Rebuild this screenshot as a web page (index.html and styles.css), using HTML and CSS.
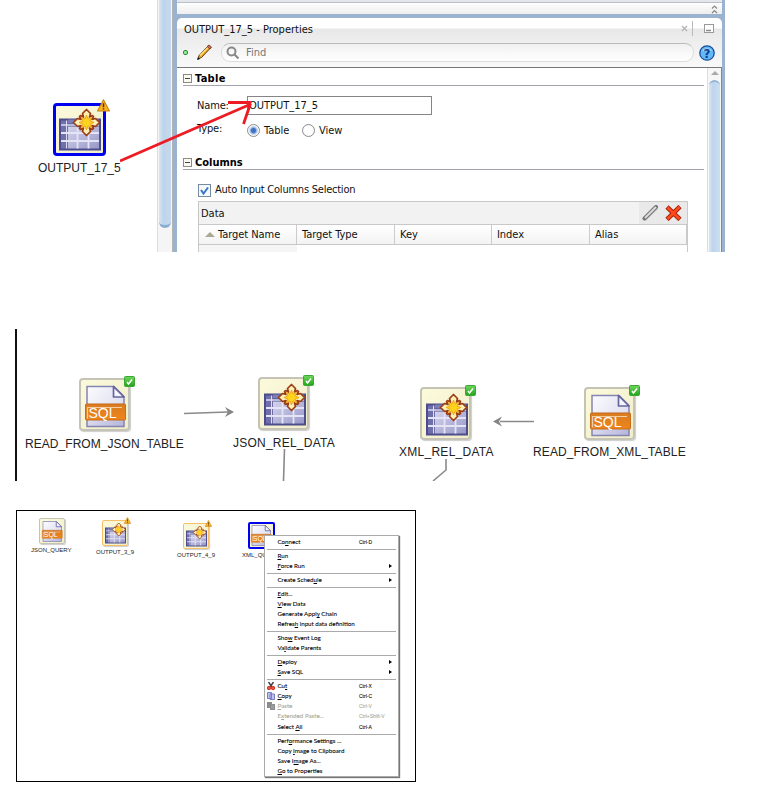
FILE: index.html
```html
<!DOCTYPE html>
<html lang="en">
<head>
<meta charset="utf-8">
<title>Workflow properties</title>
<link rel="stylesheet" href="styles.css">
</head>
<body>
<svg class="defs" width="0" height="0">
  <defs>
    <linearGradient id="lilac" x1="0" y1="0" x2="1" y2="1"><stop offset="0" stop-color="#fafaff"/><stop offset="1" stop-color="#b4b4dc"/></linearGradient>
    <linearGradient id="cells" x1="0" y1="0" x2="1" y2="1"><stop offset="0" stop-color="#d4d4ee"/><stop offset="1" stop-color="#9898c8"/></linearGradient>
    <linearGradient id="orange" x1="0" y1="0" x2="0" y2="1"><stop offset="0" stop-color="#d87b21"/><stop offset="1" stop-color="#ef851b"/></linearGradient>
    <linearGradient id="green" x1="0" y1="0" x2="0" y2="1"><stop offset="0" stop-color="#71d65d"/><stop offset="1" stop-color="#20a51b"/></linearGradient>
    <symbol id="table-art" viewBox="0 0 52 52">
      <rect x="6" y="15" width="42" height="32" fill="#4d4d8c"/>
      <rect x="8" y="17" width="4" height="28" fill="#6f6fae"/>
      <rect x="15" y="16" width="31" height="4" fill="#7c7cb6"/>
      <rect x="15" y="23" width="31" height="22" fill="url(#cells)"/>
      <path d="M8 21.500H46M13.500 17V45" stroke="#dcdcf2" stroke-width="1.500"/>
      <path d="M8 29.500H46M8 37.500H46M24.500 17V45M35.500 17V45" stroke="#e4e4f6" stroke-width="1.800"/>
      <g transform="translate(.5 1)">
        <path d="M33 5.500l4 4-1 3.500 3-1.500 1 1-1.500 3 3.500-1 4 4-4 4-3.500-1 1.500 3-1 1-3-1.500 1 3.500-4 4-4-4 1-3.500-3 1.500-1-1 1.500-3-3.500 1-4-4 4-4 3.500 1-1.500-3 1-1 3 1.500-1-3.500z" transform="translate(0 -.5)" fill="#fff0b4" stroke="#9c3d14" stroke-width="1.700" stroke-linejoin="round"/>
        <path d="M33 10.500l1.500 4 3.500-1.500-1.500 3.500 4 1.500-4 1.500 1.500 3.500-3.500-1.500-1.500 4-1.500-4-3.500 1.500 1.500-3.500-4-1.500 4-1.500-1.500-3.500 3.500 1.500z" fill="#ffd21c" stroke="#e89d10" stroke-width=".8"/>
      </g>
    </symbol>
    <symbol id="sql-art" viewBox="0 0 52 52">
      <path d="M8 7h27l10 10v30H8z" fill="url(#lilac)" stroke="#8585b1" stroke-width="1.500"/>
      <path d="M9 8h25l10 10v6H9z" fill="#fff" fill-opacity=".4"/>
      <path d="M34.500 7v10.500H45z" fill="#f5f5ff" stroke="#66669f" stroke-width="1.700" stroke-linejoin="round"/>
      <rect x="6.500" y="24.500" width="40" height="16" rx="1" fill="url(#orange)" stroke="#c76c18"/>
      <path d="M8.500 39V28H43" fill="none" stroke="#f5cfa4" stroke-width="1.200"/>
      <text x="9.500" y="38" class="sql-text" textLength="28">SQL</text>
    </symbol>
    <symbol id="ok-badge" viewBox="0 0 11 11"><rect x=".5" y=".5" width="10" height="10" rx="1" fill="url(#green)" stroke="#3ba634"/><path d="M3 6l1.500 2L8 3.500" fill="none" stroke="#fff" stroke-width="1.500"/></symbol>
    <symbol id="warn-badge" viewBox="0 0 12 12"><path d="M6 .7L11.500 11H.5z" fill="#fab41e" stroke="#c98211" stroke-linejoin="round"/><path d="M6 4v3.500M6 8.500v1.300" stroke="#553000" stroke-width="1.400"/></symbol>
  </defs>
</svg>

<section class="editor">
  <div class="flow">
    <div class="node selected big out17">
      <svg class="tile"><use href="#table-art"/></svg>
      <svg class="badge warn"><use href="#warn-badge"/></svg>
    </div>
    <span class="label l17">OUTPUT_17_5</span>
  </div>
  <div class="track"><div class="thumb"></div></div>
  <div class="panel">
    <div class="strip"><svg width="7" height="9" viewBox="0 0 7 9"><path d="M1 3.500L3.500 1 6 3.500M1 8L3.500 5.500 6 8" fill="none" stroke="#888" stroke-width="1.200"/></svg></div>
    <div class="head">
      <div class="title"><span class="t-title">OUTPUT_17_5 - Properties</span>
        <svg class="winbtns" width="34" height="16" viewBox="0 0 34 16"><path d="M2 5l5 5M7 5l-5 5" stroke="#b8b8b8" stroke-width="1.500"/><path d="M12.500 0v15" stroke="#bbb"/><rect x="24.500" y="3.500" width="9" height="8" fill="#fff" stroke="#999"/><path d="M26 9.500h5" stroke="#888" stroke-width="1.500"/></svg>
      </div>
      <div class="tools">
        <span class="dot"></span>
        <svg class="pencil" width="17" height="17" viewBox="0 0 17 17"><path d="M2 15l1-3.500L12.500 1.500l2.500 2L5.500 13.500z" fill="#f6a81c" stroke="#4e3312" stroke-width=".9"/><path d="M4 11.500L12.500 3" stroke="#ffe48c" stroke-width="1.300"/><path d="M11 2.500L13 1l2.500 2L14 5z" fill="#c0705c" stroke="#6d2e1c" stroke-width=".7"/><path d="M1 16l1-3L4 15z" fill="#111"/></svg>
        <div class="find"><svg width="14" height="14" viewBox="0 0 14 14"><circle cx="5.500" cy="5.500" r="4" fill="none" stroke="#888" stroke-width="2"/><path d="M8.500 8.500l4 4" stroke="#888" stroke-width="2.200"/></svg><span>Find</span></div>
        <svg class="help" width="16" height="16" viewBox="0 0 16 16"><circle cx="8" cy="8" r="7.200" fill="#62b9f8" stroke="#1c4f9b" stroke-width="1.300"/><path d="M3 6a5.500 4.500 0 0 1 10 0" fill="#a9dcff"/><text x="8" y="12.500" class="q">?</text></svg>
      </div>
    </div>
    <div class="body">
      <div class="content">
        <h2 class="h-table"><i></i><span>Table</span></h2>
        <div class="row name"><label>Name:</label><div class="input">OUTPUT_17_5</div></div>
        <div class="row type"><label>Type:</label><div class="radio on"></div><span class="r1">Table</span><div class="radio"></div><span>View</span></div>
        <h2 class="h-cols"><i></i><span>Columns</span></h2>
        <div class="check"><svg width="13" height="13" viewBox="0 0 13 13"><rect x=".5" y=".5" width="12" height="12" fill="#f4f8fc" stroke="#758ba2"/><path d="M3 6l2.500 3.500L10 3.500" fill="none" stroke="#3a74c4" stroke-width="2"/></svg><span>Auto Input Columns Selection</span></div>
        <div class="grid">
          <div class="bar"><span>Data</span><div class="acts">
            <svg width="17" height="16" viewBox="0 0 17 16"><path d="M3 14.500L15 3" stroke="#ccc" stroke-width="3"/><path d="M2.500 13.500L14 2" stroke="#777" stroke-width="4" stroke-linecap="round"/><path d="M3 13L14 2" stroke="#ddd" stroke-width="1.800"/></svg>
            <svg width="17" height="16" viewBox="0 0 17 16"><path d="M2 2l13 12.500M15 1.500L2 14.500" stroke="#a42510" stroke-width="4.600"/><path d="M2.500 2.500l12 11.500M14.500 2L2.500 14" stroke="#ff4a1c" stroke-width="2.600"/></svg>
          </div></div>
          <div class="cols"><div><b class="sort"></b>Target Name</div><div>Target Type</div><div>Key</div><div>Index</div><div>Alias</div></div>
          <div class="firstrow"></div>
        </div>
      </div>
      <div class="scroll"><b></b><div></div></div>
    </div>
  </div>
  <svg class="pointer" width="260" height="100" viewBox="0 0 260 100"><path d="M0 72L131 15M108 13.500H131M130.500 14.500L123.500 35" fill="none" stroke="#ed1c24" stroke-width="2.800"/></svg>
</section>

<section class="graph">
  <svg class="links" width="700" height="152" viewBox="0 329 700 152">
    <g fill="none" stroke="#8a8a8a" stroke-width="1.600"><path d="M184 413.500L228 412M284.500 449L283.500 481M534 421.500H500M446 459v11l-13 11"/></g>
    <path d="M234 412l-9-5 3 5-3 5zM493 421.500l9-5-3 5 3 5z" fill="#858585"/>
  </svg>
  <div class="node n1"><svg class="tile"><use href="#sql-art"/></svg><svg class="badge"><use href="#ok-badge"/></svg></div><span class="label l1">READ_FROM_JSON_TABLE</span>
  <div class="node n2"><svg class="tile"><use href="#table-art"/></svg><svg class="badge"><use href="#ok-badge"/></svg></div><span class="label l2">JSON_REL_DATA</span>
  <div class="node n3"><svg class="tile"><use href="#table-art"/></svg><svg class="badge"><use href="#ok-badge"/></svg></div><span class="label l3">XML_REL_DATA</span>
  <div class="node n4"><svg class="tile"><use href="#sql-art"/></svg><svg class="badge"><use href="#ok-badge"/></svg></div><span class="label l4">READ_FROM_XML_TABLE</span>
</section>

<section class="desk">
  <div class="node small s1"><svg class="tile"><use href="#sql-art"/></svg></div><span class="label tiny t1">JSON_QUERY</span>
  <div class="node small amber s2"><svg class="tile"><use href="#table-art"/></svg><svg class="badge"><use href="#warn-badge"/></svg></div><span class="label tiny t2">OUTPUT_3_9</span>
  <div class="node small amber s3"><svg class="tile"><use href="#table-art"/></svg><svg class="badge"><use href="#warn-badge"/></svg></div><span class="label tiny t3">OUTPUT_4_9</span>
  <div class="node small selected s4"><svg class="tile"><use href="#sql-art"/></svg></div><span class="label tiny t4">XML_QUERY</span>
  <div class="menu">
    <div class="item"><span>Co<u>n</u>nect</span><kbd>Ctrl-D</kbd></div>
    <hr>
    <div class="item"><span><u>R</u>un</span></div>
    <div class="item sub"><span><u>F</u>orce Run</span></div>
    <hr>
    <div class="item sub"><span>Create Sched<u>u</u>le</span></div>
    <hr>
    <div class="item"><span><u>E</u>dit...</span></div>
    <div class="item"><span><u>V</u>iew Data</span></div>
    <div class="item"><span>Generate Appl<u>y</u> Chain</span></div>
    <div class="item"><span>Refres<u>h</u> input data definition</span></div>
    <hr>
    <div class="item"><span>Sho<u>w</u> Event Log</span></div>
    <div class="item"><span>Va<u>l</u>idate Parents</span></div>
    <hr>
    <div class="item sub"><span><u>D</u>eploy</span></div>
    <div class="item sub"><span><u>S</u>ave SQL</span></div>
    <hr>
    <div class="item"><svg width="8" height="8" viewBox="0 0 8 8"><path d="M1.500 0L5 5M6.500 0L3 5" stroke="#444" stroke-width="1.500"/><circle cx="2" cy="6" r="1.300" fill="none" stroke="#d9301c" stroke-width="1.600"/><circle cx="6" cy="6" r="1.300" fill="none" stroke="#d9301c" stroke-width="1.600"/></svg><span>Cu<u>t</u></span><kbd>Ctrl-X</kbd></div>
    <div class="item"><svg width="8" height="8" viewBox="0 0 8 8"><path d="M.5.5h4v6h-4zM3 2h4.500v5.500H3z" fill="#c3c3ef" stroke="#7b7bc3"/></svg><span><u>C</u>opy</span><kbd>Ctrl-C</kbd></div>
    <div class="item off"><svg width="8" height="8" viewBox="0 0 8 8"><path d="M0 0h5v6H0zM3 2h5v6H3z" fill="#8c8c8c"/><path d="M4 4h3M4 6h3" stroke="#aaa"/></svg><span><u>P</u>aste</span><kbd>Ctrl-V</kbd></div>
    <div class="item off"><span>E<u>x</u>tended Paste...</span><kbd>Ctrl+Shift-V</kbd></div>
    <div class="item"><span>Select <u>A</u>ll</span><kbd>Ctrl-A</kbd></div>
    <hr>
    <div class="item"><span>Perf<u>o</u>rmance Settings ...</span></div>
    <div class="item"><span>Copy <u>I</u>mage to Clipboard</span></div>
    <div class="item"><span>Save I<u>m</u>age As...</span></div>
    <div class="item"><span><u>G</u>o to Properties</span></div>
  </div>
</section>
</body>
</html>
```
FILE: styles.css
```css
* { box-sizing: border-box; }
body { margin: 0; width: 778px; height: 787px; background: #fff; overflow: hidden; font: 11px/14px "DejaVu Sans Condensed", "DejaVu Sans", sans-serif; font-stretch: condensed; color: #111; }
svg { display: block; flex: none; }
.defs { position: absolute; }
.sql-text { font: 14px "Liberation Sans", sans-serif; fill: #fff; }

.editor { position: relative; display: flex; width: 725px; height: 252px; overflow: hidden; }
.flow { width: 157px; position: relative; }
.track { width: 16px; border-left: 1px solid #ddd; border-right: 1px solid #b4b4b4; background: #f5f5f5; padding: 0 1px; }
.thumb { height: 228px; border-radius: 0 0 6px 6px; background: linear-gradient(90deg, #d8e6f5, #bfd4e9 35%, #c5daee); border-bottom: 3px solid #8aaed3; }
.panel { width: 552px; border: solid #9ab3d1; border-width: 0 3px 0 4px; background: #9ab3d1; display: flex; flex-direction: column; }
.strip { height: 14px; margin-bottom: 4px; border-top: 2px solid #e3e6ea; background: linear-gradient(#fff, #eee); box-shadow: inset 0 1px #b9bfc7; display: flex; align-items: center; justify-content: flex-end; padding: 2px 4px 0 0; }
.head { height: 49px; background: linear-gradient(#fff 0 10px, #e8e8e8 11px, #f9f9f9); border-radius: 5px 5px 0 0; flex: none; }
.title { height: 22px; display: flex; align-items: center; justify-content: space-between; padding: 0 8px 0 7px; }
.t-title { padding-top: 2px; }
.tools { display: flex; align-items: center; height: 25px; padding-left: 6px; }
.dot { width: 5px; height: 5px; border: 1.500px solid #229333; border-radius: 2px; background: #9be69b; margin-right: 8px; }
.find { width: 473px; height: 19px; margin: 0 5px 0 8px; border: 1px solid #ddd; border-top-color: #bbb; border-radius: 9px; background: linear-gradient(#f1f1f1, #fff); display: flex; align-items: center; gap: 6px; padding-left: 4px; color: #777; }
.find span { padding-top: 1px; }
.q { font: bold 12px "DejaVu Sans", sans-serif; text-anchor: middle; fill: #0d3f94; }
.body { flex: 1; background: #fff; border-top: 1px solid #777; border-right: 1px solid #888; display: flex; min-height: 0; }
.content { width: 530px; padding-left: 6px; }
.scroll { width: 14px; border-left: 1px solid #ddd; background: #f7f7f7; padding: 3px 1px 0; }
.scroll b { display: block; width: 0; margin: 0 auto; border: 4px solid transparent; border-top: 0; border-bottom-color: #aaa; }
.scroll div { height: 190px; margin-top: 5px; border-radius: 6px 6px 0 0; border-top: 2px solid #93b3d6; background: linear-gradient(90deg, #d8e6f5, #bfd4e9 35%, #c9dff3); }
h2 { margin: 0; width: 521px; height: 18px; font: bold 11px/19px "DejaVu Sans Condensed", sans-serif; font-stretch: condensed; border-bottom: 1px solid #a3a3ab; display: flex; align-items: center; gap: 3px; color: #000; }
h2 span { padding-top: 3px; }
.h-table span { letter-spacing: .3px; }
h2 i { width: 9px; height: 9px; border: 1px solid #8b8b80; background: linear-gradient(#444, #444) 1px 3px / 5px 1px no-repeat #fafaf3; margin-top: 3px; }
.row { display: flex; padding-left: 14px; }
.row label { width: 50px; letter-spacing: -.15px; }
.name { height: 20px; margin-top: 10px; line-height: 19px; }
.input { width: 185px; height: 19px; border: 1px solid #858585; line-height: 18px; padding-left: 1px; }
.type { height: 16px; margin-top: 6px; align-items: center; }
.type span { padding-top: 1px; }
.type label { margin-top: -3px; }
.radio { width: 13px; height: 13px; border: 1px solid #8d8d8d; border-radius: 50%; margin-right: 4px; background: radial-gradient(#fff 50%, #eee); }
.radio.on { background: radial-gradient(#3f72c2 0 2px, #b5cbea 3.500px, #f7faff 5px); }
.r1 { width: 38px; }
.h-cols { margin-top: 14px; }
.check { display: flex; align-items: center; gap: 4px; height: 14px; margin: 13px 0 0 15px; letter-spacing: -.23px; }
.grid { width: 490px; margin: 4px 0 0 15px; border: 1px solid #c8c8c8; height: 60px; }
.bar { height: 22px; background: #f2f2f2; display: flex; justify-content: space-between; align-items: center; padding: 1px 0 0 2px; }
.acts { display: flex; gap: 6px; height: 22px; align-items: center; background: #e9e9e9; padding: 0 5px 0 3px; margin-top: -1px; }
.cols { display: grid; grid-template-columns: 98px 98px 97px 98px 97px; height: 21px; border: solid #c8c8c8; border-width: 1px 0; background: linear-gradient(#fff, #f3f3f3); letter-spacing: -.05px; }
.cols div { border-right: 1px solid #ccc; padding-left: 5px; display: flex; align-items: center; white-space: nowrap; }
.cols .sort { border: 5px solid transparent; border-top: 0; border-bottom-color: #aaa994; margin: 0 3px 0 1px; }
.firstrow { width: 98px; height: 16px; background: #f5f5f5; }
.pointer { position: absolute; left: 120px; top: 89px; }

.graph { position: relative; width: 700px; height: 152px; margin-top: 77px; }
.graph::before { content: ""; position: absolute; left: 15px; top: 0; width: 2px; height: 152px; background: #111; }
.links { position: absolute; left: 0; top: 0; }
.node { position: absolute; width: 51px; height: 53px; border: 2px solid #c4c3b6; border-radius: 4px; background: linear-gradient(135deg, #fbfadb, #f0edca); box-shadow: 1px 1px 1px #ccc; }
.tile { position: absolute; left: -2px; top: -1px; width: 52px; height: 53px; }
.node.selected { width: 53px; border: 3px solid #0000f0; box-shadow: none; }
.selected .tile { left: -3px; top: -3px; }
.badge { position: absolute; width: 11px; height: 11px; right: -7px; top: -4px; }
.badge.warn { width: 13px; height: 13px; right: -7px; top: -7px; }
.label { position: absolute; white-space: nowrap; font: 12px/14px "Liberation Sans", Arial, sans-serif; color: #222; }
.out17 { left: 53px; top: 103px; }
.l17 { left: 38px; top: 161px; }
.n1 { left: 79px; top: 49px; }
.n2 { left: 258px; top: 48px; }
.n3 { left: 420px; top: 58px; }
.n4 { left: 584px; top: 58px; }
.l1 { left: 25px; top: 108px; letter-spacing: .05px; }
.l2 { left: 233px; top: 107px; letter-spacing: .23px; }
.l3 { left: 399px; top: 116px; letter-spacing: .27px; }
.l4 { left: 533px; top: 116px; letter-spacing: .12px; }

.desk { position: relative; width: 400px; height: 272px; margin: 29px 0 0 16px; border: 1px solid #000; }
.node.small { width: 26px; height: 26px; border-width: 1px; border-radius: 2px; }
.small .tile { left: -1px; top: -1px; width: 26px; height: 26px; }
.node.small.selected { border-width: 2px; width: 27px; height: 27px; }
.small.selected .tile { left: -2px; top: -2px; }
.node.amber { border-color: #f7bf68; }
.small .badge { width: 7px; height: 7px; right: -4px; top: -4px; }
.s1 { left: 22px; top: 7px; }
.s2 { left: 85px; top: 9px; }
.s3 { left: 166px; top: 12px; }
.s4 { left: 231px; top: 11px; }
.tiny { font-size: 6px; line-height: 8px; }
.t1 { left: 14px; top: 35px; }
.t2 { left: 79px; top: 37px; }
.t3 { left: 160px; top: 40px; }
.t4 { left: 225px; top: 40px; }
.menu { position: absolute; left: 247px; top: 24px; width: 135px; height: 242px; padding: 1px 2px; background: #fff; border: 1px solid #aaa; box-shadow: 1px 1px 1px #777; font: 6.200px/10px Lato, "Open Sans", sans-serif; color: #000; }
.item { position: relative; height: 10.040px; display: flex; align-items: center; padding-left: 10.500px; white-space: nowrap; -webkit-text-stroke: .08px; }
.item svg { margin: 0 3px 0 -11px; }
.item kbd { position: absolute; left: 92px; font: 5px/10px "Liberation Sans", sans-serif; }
.item u { text-decoration-thickness: .5px; text-underline-offset: .5px; }
.sub::after { content: ""; position: absolute; right: 4px; border: 2px solid transparent; border-left: 3px solid #000; border-right: 0; }
.off { color: #aaa996; }
hr { height: 1px; margin: 2px 0 1px; border: 0; background: #aaa; }
```
